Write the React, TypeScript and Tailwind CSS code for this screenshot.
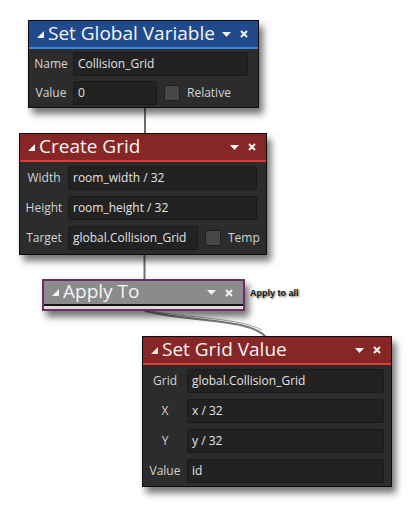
import React from "react";

type Row = { label: string; value: string; inputW: string; check?: string; checkGap?: string };

type NodeProps = {
  pos: string;
  title: string;
  bar: string;
  line: string;
  labelW: string;
  bodyPad: string;
  rowGap: string;
  rows: Row[];
};

const Corner = () => (
  <svg width="7" height="7" viewBox="0 0 7 7" className="shrink-0">
    <polygon points="7,0 7,7 0,7" fill="#f2f2f2" />
  </svg>
);

const Arrow = () => (
  <svg width="9" height="5" viewBox="0 0 9 5">
    <polygon points="0,0 9,0 4.5,5" fill="#f2f2f2" />
  </svg>
);

const Close = () => (
  <svg width="8" height="8" viewBox="0 0 8 8">
    <path d="M1 1 L7 7 M7 1 L1 7" stroke="#f2f2f2" strokeWidth="2" />
  </svg>
);

function TitleBar({ title, bar, h }: { title: string; bar: string; h: string }) {
  return (
    <div className={`flex items-center pl-[8px] pr-[10px] ${bar} ${h}`}>
      <Corner />
      <span className="ml-[4px] text-[19px] leading-none text-[#f4f4f4] pb-[2px]">{title}</span>
      <div className="ml-auto flex items-center gap-[9px]">
        <Arrow />
        <Close />
      </div>
    </div>
  );
}

function Node({ pos, title, bar, line, labelW, bodyPad, rowGap, rows }: NodeProps) {
  return (
    <div
      className={`absolute ${pos} flex flex-col border border-[#0c0c0c] bg-[#2c2c2c] shadow-[4px_6px_7px_rgba(0,0,0,0.55)]`}
    >
      <TitleBar title={title} bar={bar} h="h-[26px]" />
      <div className={`h-[2px] ${line}`} />
      <div className={`flex flex-col ${bodyPad} ${rowGap}`}>
        {rows.map((r) => (
          <div key={r.label} className="flex items-center h-[24px]">
            <div className={`${labelW} text-center text-[12px] text-[#d4d4d4]`}>{r.label}</div>
            <div
              className={`${r.inputW} h-[24px] flex items-center pl-[4px] bg-[#222222] border border-[#1a1a1a] rounded-[2px] text-[12px] text-[#e2e2e2]`}
            >
              {r.value}
            </div>
            {r.check && (
              <>
                <div className={`${r.checkGap} w-[16px] h-[16px] rounded-[2px] bg-[#474747] border border-[#1e1e1e]`} />
                <span className="ml-[7px] text-[12px] text-[#d4d4d4]">{r.check}</span>
              </>
            )}
          </div>
        ))}
      </div>
    </div>
  );
}

export default function App() {
  return (
    <div
      className="relative w-[415px] h-[508px] bg-white overflow-hidden"
      style={{ fontFamily: '"Open Sans", "Noto Sans", sans-serif' }}
    >
      <svg className="absolute inset-0" width="415" height="508">
        <line x1="145" y1="105" x2="145" y2="135" stroke="#6e6e6e" strokeWidth="2" />
        <line x1="144.5" y1="252" x2="144.5" y2="281" stroke="#6e6e6e" strokeWidth="2" />
        <path d="M145 311 C 195 323, 250 318, 267 338" stroke="#777" strokeWidth="2" fill="none" />
        <path d="M150 311 C 190 318, 240 318, 262 330" stroke="#a0a0a0" strokeWidth="1" fill="none" />
      </svg>

      <Node
        pos="left-[28px] top-[20px] w-[231px] h-[88px]"
        title="Set Global Variable"
        bar="bg-[#214a8b]"
        line="bg-[#3b86d8]"
        labelW="w-[44px]"
        bodyPad="pt-[3px]"
        rowGap="gap-[5px]"
        rows={[
          { label: "Name", value: "Collision_Grid", inputW: "w-[175px]" },
          { label: "Value", value: "0", inputW: "w-[84px]", check: "Relative", checkGap: "ml-[7px]" },
        ]}
      />

      <Node
        pos="left-[19px] top-[133px] w-[248px] h-[122px]"
        title="Create Grid"
        bar="bg-[#862626]"
        line="bg-[#e03b3b]"
        labelW="w-[48px]"
        bodyPad="pt-[4px]"
        rowGap="gap-[6px]"
        rows={[
          { label: "Width", value: "room_width / 32", inputW: "w-[189px]" },
          { label: "Height", value: "room_height / 32", inputW: "w-[189px]" },
          { label: "Target", value: "global.Collision_Grid", inputW: "w-[130px]", check: "Temp", checkGap: "ml-[7px]" },
        ]}
      />

      <div className="absolute left-[42px] top-[279px] w-[203px] h-[32px] flex flex-col border-2 border-[#6c2c6c] bg-[#8b8b8b] shadow-[4px_6px_7px_rgba(0,0,0,0.55)]">
        <TitleBar title="Apply To" bar="bg-[#8b8b8b]" h="h-[23px]" />
        <div className="h-[2px] bg-[#151515]" />
        <div className="h-[3px] bg-[#dcdcdc]" />
      </div>
      <span
        className="absolute left-[250px] top-[287px] text-[9px] font-bold text-[#111]"
        style={{ fontFamily: '"Liberation Sans", sans-serif', textShadow: "1px 1px 2px rgba(0,0,0,0.6)" }}
      >
        Apply to all
      </span>

      <Node
        pos="left-[142px] top-[336px] w-[250px] h-[151px]"
        title="Set Grid Value"
        bar="bg-[#862626]"
        line="bg-[#e03b3b]"
        labelW="w-[44px]"
        bodyPad="pt-[4px]"
        rowGap="gap-[6px]"
        rows={[
          { label: "Grid", value: "global.Collision_Grid", inputW: "w-[197px]" },
          { label: "X", value: "x / 32", inputW: "w-[197px]" },
          { label: "Y", value: "y / 32", inputW: "w-[197px]" },
          { label: "Value", value: "id", inputW: "w-[197px]" },
        ]}
      />
    </div>
  );
}
